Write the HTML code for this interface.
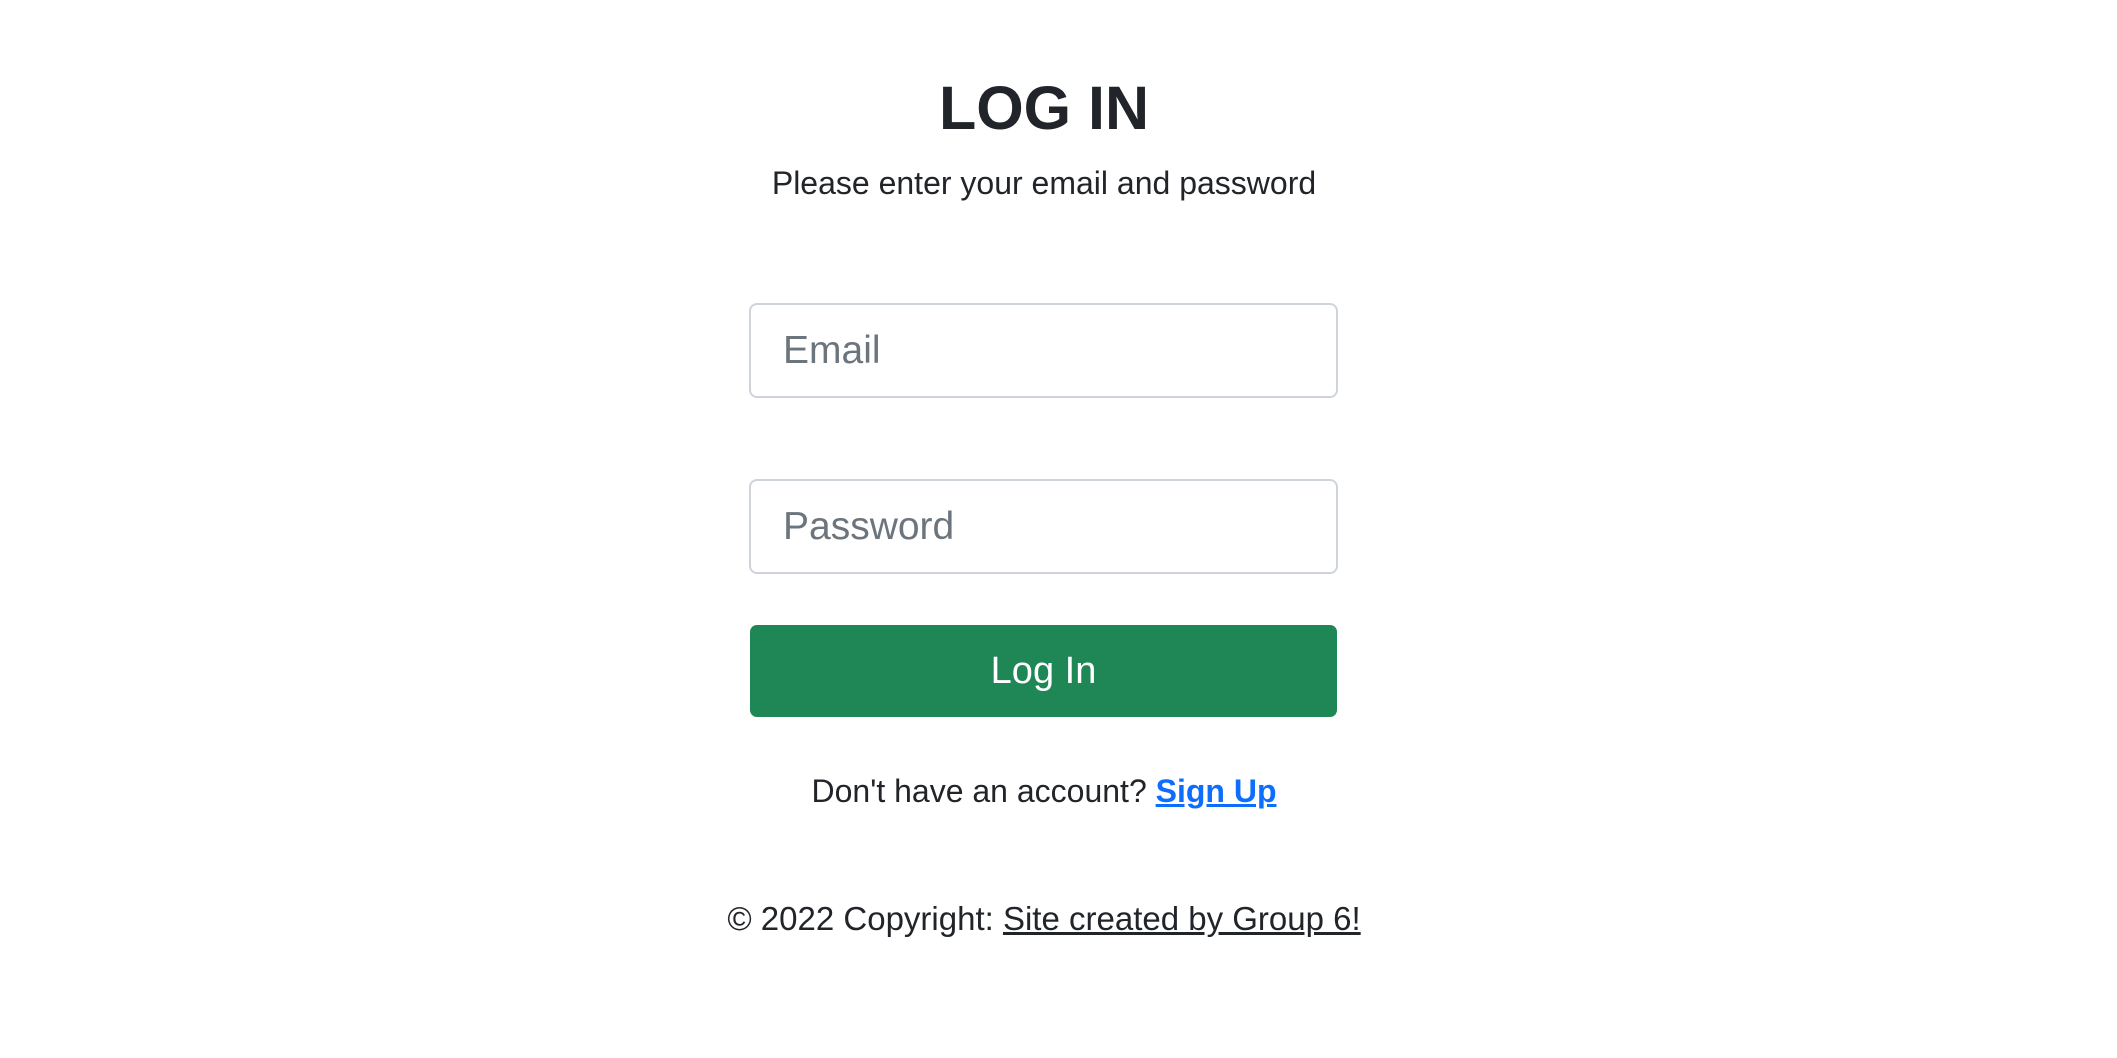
<!DOCTYPE html>
<html><head><meta charset="utf-8"><style>
body{margin:0;background:#fff;font-family:"Liberation Sans",sans-serif;color:#212529;width:2117px;height:1058px;overflow:hidden;position:relative}
h1{position:absolute;left:744px;width:600px;top:72px;margin:0;font-size:61px;font-weight:bold;text-align:center;line-height:72px}
.sub{position:absolute;left:644px;width:800px;top:163px;font-size:32px;text-align:center;line-height:40px}
.in{position:absolute;left:749px;width:585px;height:91px;border:2px solid #ced4da;border-radius:8px;box-sizing:content-box}
.in span{position:absolute;left:32px;top:0;line-height:91px;font-size:39px;color:#6c757d}
.btn{position:absolute;left:750px;top:625px;width:587px;height:92px;background:#1f8756;border-radius:7px;color:#fff;font-size:38px;line-height:92px;text-align:center}
.t{position:absolute;left:544px;width:1000px;text-align:center;font-size:32px;line-height:40px}
a{color:#212529}
a.b{color:#0d6efd;font-weight:bold}
</style></head><body>
<h1>LOG IN</h1>
<div class="sub">Please enter your email and password</div>
<div class="in" style="top:303px"><span>Email</span></div>
<div class="in" style="top:479px"><span>Password</span></div>
<div class="btn">Log In</div>
<div class="t" style="top:771px">Don't have an account? <a class="b" href="#">Sign Up</a></div>
<div class="t" style="top:899px;font-size:33px">© 2022 Copyright: <a href="#">Site created by Group 6!</a></div>
</body></html>
